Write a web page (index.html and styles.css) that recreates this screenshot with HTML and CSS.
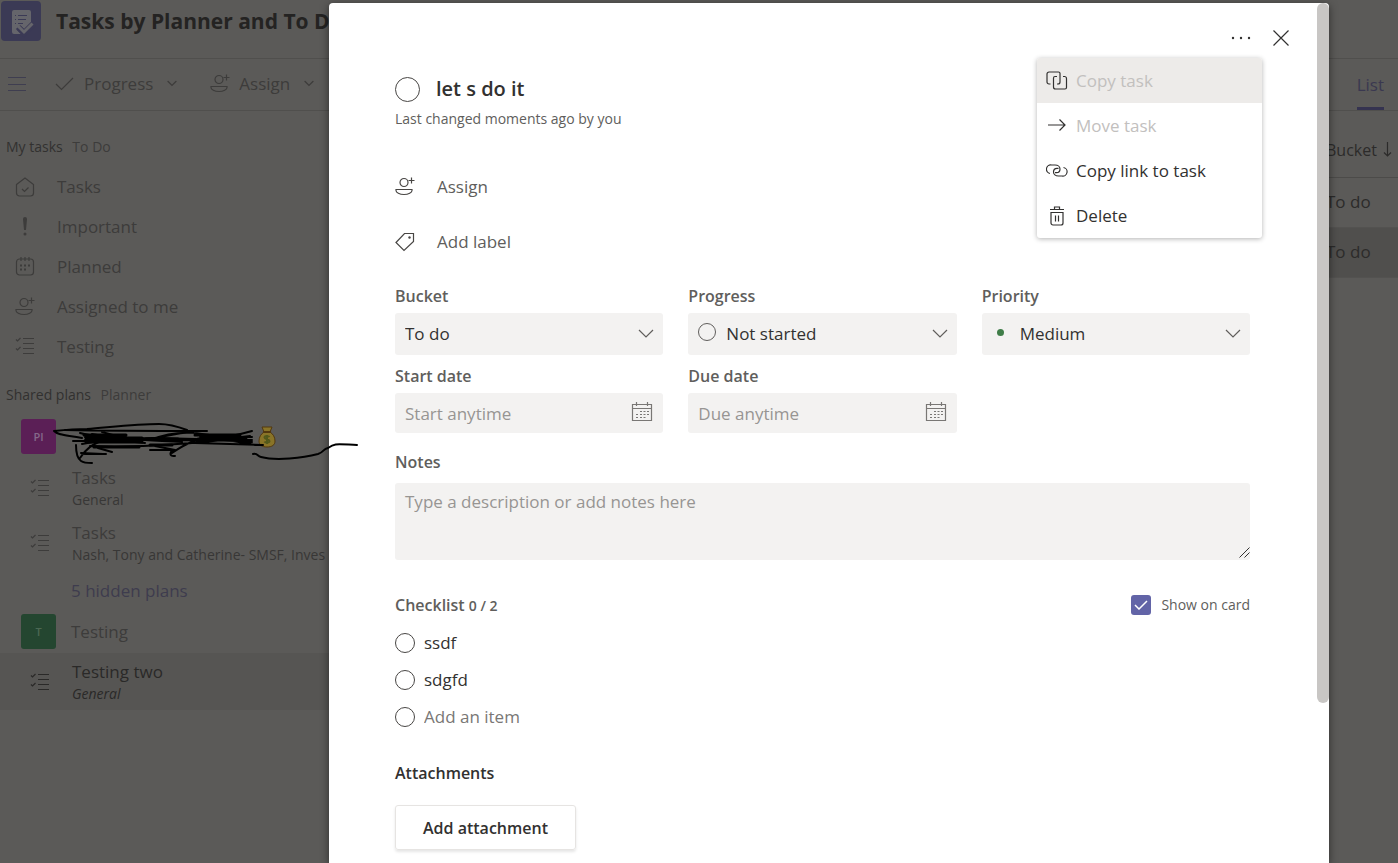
FILE: index.html
```html
<!DOCTYPE html>
<html lang="en">
<head>
<meta charset="utf-8">
<title>Tasks by Planner and To Do</title>
<link rel="stylesheet" href="styles.css">
</head>
<body>
<svg class="sprite" aria-hidden="true">
  <symbol id="i-person" viewBox="0 0 20 20"><circle cx="9" cy="5.500" r="4"/><path d="M16.500 0.500v6M13.500 3.500h6M1 12.500h16v1c0 2-3.500 4-8 4s-8-2-8-4z"/></symbol>
  <symbol id="i-list" viewBox="0 0 20 20"><path d="M1 2.500l1.500 1.500 3-3M1 11.500l1.500 1.500 3-3M8 1.500h11M8 6.500h11M8 11.500h11M8 16.500h11"/></symbol>
  <symbol id="i-chev" viewBox="0 0 16 10"><path d="M1 1l7 7 7-7"/></symbol>
  <symbol id="i-cal" viewBox="0 0 22 20"><path d="M1.500 2.500h19v16h-19zM1.500 6.500h19M5.500 0v4M16.500 0v4"/><path d="M9 9.500h2M12.500 9.500h2M16 9.500h2M5 12.500h2M9 12.500h2M12.500 12.500h2M16 12.500h2M5 15.500h2M9 15.500h2M12.500 15.500h2"/></symbol>
</svg>

<div class="app">
  <header class="app-header">
    <svg class="logo" viewBox="0 0 40 40" aria-hidden="true">
      <rect width="40" height="40" rx="4" class="logo-bg"/>
      <path class="logo-fg" d="M13 9h15a2 2 0 0 1 2 2v12l-6 6-4-4-4 4 4 4h-7a2 2 0 0 1-2-2V11a2 2 0 0 1 2-2z"/>
      <path class="logo-line" d="M14 14.500h1M17 14.500h9M14 18.500h1M17 18.500h8M14 22.500h1M17 22.500h5"/>
      <path class="logo-cut" d="M17 26l6 6 9-9"/>
      <path class="logo-check" d="M17 25l6 6 8.500-8.500"/>
    </svg>
    <h1 class="app-title">Tasks by Planner and To Do</h1>
  </header>

  <div class="toolbar">
    <button class="tool menu-toggle" aria-label="Toggle navigation"><svg width="18" height="16" viewBox="0 0 18 16"><path d="M0 1.500h18M0 8.500h18M0 14.500h18"/></svg></button>
    <button class="tool tool-progress"><svg width="20" height="14" viewBox="0 0 20 14"><path d="M1 7l5.500 5.500L18 1"/></svg><span>Progress</span><svg class="tool-chev" width="10" height="7" viewBox="0 0 16 10"><use href="#i-chev"/></svg></button>
    <button class="tool"><svg width="20" height="20"><use href="#i-person"/></svg><span>Assign</span><svg class="tool-chev" width="10" height="7" viewBox="0 0 16 10"><use href="#i-chev"/></svg></button>
    <a class="tab" href="#list">List</a>
  </div>

  <div class="workspace">
    <nav class="sidebar">
      <h2 class="side-heading">My tasks <small>To Do</small></h2>
      <a class="side-item" href="#tasks"><svg width="20" height="20" viewBox="0 0 20 20"><path d="M1.500 7.500L10 1l8.500 6.500V16a3 3 0 0 1-3 3h-11a3 3 0 0 1-3-3zM7 12l2.500 2.500 4-4"/></svg>Tasks</a>
      <a class="side-item" href="#important"><svg width="20" height="20" viewBox="0 0 20 20"><path class="solid" d="M8 2a2 2 0 0 1 4 0l-1 11H9z"/><circle class="solid" cx="10" cy="17" r="1.500"/></svg>Important</a>
      <a class="side-item" href="#planned"><svg width="20" height="20" viewBox="0 0 20 20"><rect x="1.500" y="2" width="17" height="16" rx="3"/><path d="M6 0v4M10 0v4M14 0v4"/><path class="dots" d="M5 8.500h2M9 8.500h2M13 8.500h2M5 12.500h2M9 12.500h2"/></svg>Planned</a>
      <a class="side-item" href="#assigned"><svg width="20" height="20"><use href="#i-person"/></svg>Assigned to me</a>
      <a class="side-item" href="#testing"><svg width="20" height="20"><use href="#i-list"/></svg>Testing</a>

      <h2 class="side-heading shared">Shared plans <small>Planner</small></h2>
      <div class="plan"><span class="avatar pink">PI</span>
        <svg class="money" width="18" height="22" viewBox="0 0 18 22" aria-hidden="true"><path class="bag" d="M4 1h10l-2 5c3 2 5 5 5 9 0 4-3 6-8 6s-8-2-8-6c0-4 2-7 5-9z"/><path class="tie" d="M5 6h8"/><path class="dollar" d="M11.500 11c-1-1.500-5-1.500-5 .5s5 1.500 5 3.500-4 2-5 .5M9 9v9"/></svg>
      </div>
      <a class="channel first" href="#general"><svg width="20" height="20"><use href="#i-list"/></svg><span>Tasks<small>General</small></span></a>
      <a class="channel" href="#smsf"><svg width="20" height="20"><use href="#i-list"/></svg><span>Tasks<small>Nash, Tony and Catherine- SMSF, Inves</small></span></a>
      <a class="hidden-plans" href="#hidden">5 hidden plans</a>
      <div class="plan"><span class="avatar green">T</span>Testing</div>
      <a class="channel selected" href="#testing-two"><svg width="20" height="20"><use href="#i-list"/></svg><span>Testing two<small>General</small></span></a>
    </nav>
    <main class="tasks">
      <table class="task-table">
        <colgroup><col><col class="bucket-col"></colgroup>
        <thead><tr><td></td><th scope="col"><span class="sort">Bucket<svg width="9" height="15" viewBox="0 0 9 15"><path d="M4.500 0v14M1 10.500L4.500 14 8 10.500"/></svg></span></th></tr></thead>
        <tbody>
          <tr><td></td><td>To do</td></tr>
          <tr class="current"><td></td><td>To do</td></tr>
        </tbody>
      </table>
    </main>
  </div>
</div>

<div class="overlay">
  <section class="dialog" role="dialog" aria-labelledby="task-title">
    <div class="thumb"></div>
    <div class="dialog-actions">
      <button class="icon-btn" aria-label="More options"><svg width="20" height="4" viewBox="0 0 20 4"><circle class="solid" cx="2" cy="2" r="1.200"/><circle class="solid" cx="10" cy="2" r="1.200"/><circle class="solid" cx="18" cy="2" r="1.200"/></svg></button>
      <button class="icon-btn" aria-label="Close"><svg width="16" height="16" viewBox="0 0 16 16"><path d="M.5.500l15 15M15.500.500l-15 15"/></svg></button>
    </div>
    <div class="menu" role="menu">
      <button class="menu-item hover" role="menuitem" disabled><svg width="22" height="20" viewBox="0 0 22 20"><path d="M4.500 13H3a2 2 0 0 1-2-2V3a2 2 0 0 1 2-2h9.500a1.500 1.500 0 0 1 1.500 1.500V11a2 2 0 0 1-2 2h-1M11 5.500H9a1.500 1.500 0 0 0-1.500 1.500v9a2 2 0 0 0 2 2H19a1.500 1.500 0 0 0 1.500-1.500V7.500a2 2 0 0 0-2-2H17"/></svg>Copy task</button>
      <button class="menu-item" role="menuitem" disabled><svg width="22" height="20" viewBox="0 0 22 20"><path d="M2 9h17M13.500 3.500L19 9l-5.500 5.500"/></svg>Move task</button>
      <button class="menu-item" role="menuitem"><svg width="22" height="20" viewBox="0 0 22 20"><path d="M4 12.500A4.200 4.200 0 0 1 5.500 4H9c3 0 5 1.800 5 4s-1.500 3.700-3.500 3.700H9M17.500 6.500A4.200 4.200 0 0 1 16 15h-3.500c-3 0-5-1.800-5-4s1.500-3.700 3.500-3.700h1.500"/></svg>Copy link to task</button>
      <button class="menu-item" role="menuitem"><svg width="22" height="20" viewBox="0 0 22 20"><path d="M4 3.500h14M8.500 3V1h5v2M5 6.500h12V17a2 2 0 0 1-2 2H7a2 2 0 0 1-2-2zM9.500 9.500v6M12.500 9.500v6"/></svg>Delete</button>
    </div>

    <div class="title-row"><input class="round large" type="checkbox" aria-label="Mark task complete"><h2 id="task-title">let s do it</h2></div>
    <p class="changed">Last changed moments ago by you</p>
    <button class="meta assign"><svg width="22" height="20" viewBox="0 0 22 20"><use href="#i-person" width="20" height="20"/></svg>Assign</button>
    <button class="meta label"><svg width="22" height="20" viewBox="0 0 22 20"><path d="M1 10.500L9.500 1.500h9v8L9 18.500z"/><circle class="solid" cx="14.500" cy="5.500" r="1.200"/></svg>Add label</button>

    <div class="fields">
      <div class="field"><label for="bucket">Bucket</label>
        <div class="control"><select id="bucket"><option>To do</option></select><svg class="chev" width="16" height="10"><use href="#i-chev"/></svg></div></div>
      <div class="field"><label for="progress">Progress</label>
        <div class="control"><span class="status"></span><select id="progress" class="with-icon"><option>Not started</option></select><svg class="chev" width="16" height="10"><use href="#i-chev"/></svg></div></div>
      <div class="field"><label for="priority">Priority</label>
        <div class="control"><span class="dot"></span><select id="priority" class="with-icon"><option>Medium</option></select><svg class="chev" width="16" height="10"><use href="#i-chev"/></svg></div></div>
      <div class="field"><label for="start">Start date</label>
        <div class="control"><input id="start" type="text" placeholder="Start anytime"><svg class="cal" width="22" height="20"><use href="#i-cal"/></svg></div></div>
      <div class="field"><label for="due">Due date</label>
        <div class="control"><input id="due" type="text" placeholder="Due anytime"><svg class="cal" width="22" height="20"><use href="#i-cal"/></svg></div></div>
    </div>

    <div class="field notes"><label for="notes">Notes</label>
      <div class="control"><textarea id="notes" placeholder="Type a description or add notes here"></textarea><svg class="grip" width="11" height="11" viewBox="0 0 11 11"><path d="M.5 10.500l10-10M5.500 10.500l5-5"/></svg></div></div>

    <div class="check-head">
      <h3>Checklist <small>0 / 2</small></h3>
      <label class="show"><span class="tick"><input type="checkbox" checked><svg width="14" height="10" viewBox="0 0 14 10"><path d="M1 5l4 4 8-8"/></svg></span>Show on card</label>
    </div>
    <ul class="checklist">
      <li><label><input class="round" type="checkbox">ssdf</label></li>
      <li><label><input class="round" type="checkbox">sdgfd</label></li>
      <li><input class="round" type="checkbox" aria-label="New item done"><input class="new-item" type="text" placeholder="Add an item" aria-label="Add an item"></li>
    </ul>

    <h3 class="attachments">Attachments</h3>
    <button class="attach">Add attachment</button>
  </section>
</div>

<svg class="scribble" width="370" height="50" viewBox="0 0 370 50" aria-hidden="true">
  <path d="M54 11c10-1 20-2 33-2 25-2 50-5 72-5 12 0 20 3 28 6M54 11c5 5 14 4 28 7M65 10c45 1 90 1 142 1M73 21h60c20-1 40-8 60-9M80 13c30 8 60 6 90 7s50 0 82-9M82 24c50-10 110-5 170-2M85 17l60 6M92 14l46 8M90 26c50 2 100-2 150-8M85 20h80M102 12c30 10 50 8 80 10M76 25c0 9 2 14 5 16 3 2 6 2 11 2M80 38c6-9 12-14 24-18M82 34h24M98 28l14 4M81 33l22 1M150 30h25M155 26l20 4M175 36c-7 1-5-6 0-6M172 33c10-7 14-9 22-12M150 20c30-12 50-8 100 3M195 14l60 11M200 17h52M190 23l60-7M195 23l68 2M210 20h42"/>
  <path d="M84 15h42M86 18h56M86 22h56M94 27h45M195 15h45M198 19h48M146 19h32M150 25h22" class="thick"/>
  <path d="M253 34c5-1 4 2 8 3 15 4 42 1 57-3 6-2 5-5 10-6 7-5 8-4 29-3"/>
</svg>
</body>
</html>
```

FILE: styles.css
```css
* { box-sizing: border-box; }
body { margin: 0; font: 17px/22px "Open Sans", "Noto Sans", sans-serif; color: #3d3c3b; background: #5b5a58; min-height: 100vh; overflow: hidden; }
button, input, select, textarea { font: inherit; color: inherit; }
button { border: 0; background: none; padding: 0; }
a { color: inherit; text-decoration: none; }
h1, h2, h3, p, ul { margin: 0; padding: 0; }
small { font-size: 14px; }
svg { flex: none; fill: none; stroke: currentColor; stroke-width: 1.2; }
.solid { fill: currentColor; stroke: none; }
.sprite { position: absolute; width: 0; height: 0; }

.app-header { display: flex; align-items: flex-start; gap: 15px; height: 59px; padding: 1px; border-bottom: 1px solid #504f4d; }
.logo { width: 40px; height: 40px; }
.logo-bg { fill: #3b3a55; stroke: none; }
.logo-fg { fill: #65656b; stroke: none; }
.logo-line { stroke: #3b3a55; }
.logo-cut { stroke: #3b3a55; stroke-width: 6; }
.logo-check { stroke: #65656b; stroke-width: 3; }
.app-title { font-size: 21px; line-height: 41px; font-weight: 700; color: #242322; white-space: nowrap; }

.toolbar { display: flex; align-items: center; height: 52px; padding: 0 14px 2px 8px; border-bottom: 1px solid #504f4d; }
.tool { display: flex; align-items: center; gap: 9px; }
.tool .tool-chev { margin-left: 5px; stroke-width: 2; }
.menu-toggle { margin-right: 29px; color: #3f3e50; }
.tool-progress { margin-right: 33px; }
.tab { margin: 0 0 -2px auto; align-self: stretch; line-height: 52px; color: #3a3850; border-bottom: 3px solid #353350; }

.workspace { display: flex; }
.sidebar { flex: none; width: 329px; padding-top: 25px; overflow: hidden; }
.side-heading { font-size: 14px; font-weight: 400; padding-left: 6px; margin-bottom: 9px; color: #323130; }
.side-heading small { margin-left: 6px; color: #3d3c3b; }
.shared { margin: 17px 0 13px; }
.side-item { display: flex; align-items: center; height: 40px; padding-left: 15px; gap: 22px; }
.dots { stroke-width: 2; }
.plan { display: flex; align-items: center; gap: 15px; height: 35px; padding-left: 21px; }
.avatar { width: 35px; height: 35px; border-radius: 3px; text-align: center; font-size: 11px; line-height: 35px; font-weight: 600; }
.pink { background: #5b1f56; color: #85698a; }
.green { background: #244630; color: #4c6853; }
.money { margin-left: 187px; stroke-width: 1; }
.bag { fill: #897428; stroke: #53380f; }
.tie { stroke: #53380f; stroke-width: 2; }
.dollar { stroke: #52591b; stroke-width: 2; }
.channel { display: flex; align-items: center; height: 55px; padding-left: 30px; gap: 22px; white-space: nowrap; }
.channel small { display: block; line-height: 21px; color: #383736; }
.first { margin-top: 7px; }
.hidden-plans { display: block; line-height: 40px; margin: 0 0 3px 71px; color: #3e3c4e; }
.selected { margin-top: 4px; height: 57px; padding-top: 2px; background: #565553; color: #2a2928; }
.selected small { font-style: italic; color: #2a2928; }

.tasks { flex: 1; }
.task-table { width: 100%; table-layout: fixed; border-collapse: collapse; }
.bucket-col { width: 72px; }
.task-table th, .task-table td { height: 50px; padding: 0; font-weight: 400; text-align: left; color: #2c2b2a; white-space: nowrap; }
.task-table thead th { height: 66px; padding-top: 12px; border-bottom: 1px solid #4c4b49; }
.task-table tbody tr { border-bottom: 1px solid #535250; }
.sort { display: flex; align-items: center; gap: 6px; font-size: 16px; }
.current { background: #504f4d; }

.overlay { position: absolute; inset: 0; display: flex; padding: 3px 69px 0 329px; }
.dialog { position: relative; flex: 1; min-width: 0; padding: 19px 79px 14px 66px; background: #fff; border-radius: 4px 4px 0 0; box-shadow: 0 2px 8px rgba(0, 0, 0, .5); color: #323130; }
.thumb { position: absolute; top: 0; right: 0; width: 12px; height: 700px; border-radius: 6px; background: #c8c6c4; }
.dialog-actions { display: flex; justify-content: flex-end; gap: 8px; margin-right: -47px; }
.icon-btn { display: flex; align-items: center; justify-content: center; width: 32px; height: 32px; }

.menu { position: absolute; z-index: 1; top: 55px; right: 67px; width: 225px; background: #fff; border-radius: 3px; box-shadow: 0 1px 5px rgba(0, 0, 0, .3); overflow: hidden; }
.menu-item { display: flex; align-items: center; gap: 8px; width: 100%; height: 45px; padding-left: 9px; }
.menu-item svg { color: #323130; }
.menu-item:disabled { color: #c2c0be; }
.hover { background: #edebe9; }

.title-row { display: flex; align-items: center; gap: 16px; height: 30px; margin-top: 20px; }
.title-row h2 { font-size: 20px; font-weight: 600; }
.round { appearance: none; flex: none; width: 20px; height: 20px; margin: 0; border: 1px solid #484644; border-radius: 50%; }
.large { width: 25px; height: 25px; }
.changed { margin-top: 4px; font-size: 14px; color: #605e5c; }
.meta { display: flex; align-items: center; gap: 20px; height: 30px; color: #605e5c; }
.meta svg { color: #484644; }
.assign { margin-top: 42px; }
.label { margin-top: 25px; }

.fields { display: grid; grid-template-columns: repeat(3, 1fr); gap: 10px 25px; margin-top: 28px; }
.field { display: grid; gap: 6px; }
.field > label, .check-head h3 { font-size: 16px; font-weight: 600; color: #605e5c; }
.control { position: relative; display: flex; }
.control select, .control input, .control textarea { appearance: none; width: 100%; height: 42px; padding: 0 10px; border: 0; border-radius: 3px; background: #f3f2f1; }
.control input { height: 40px; }
.control .with-icon { padding-left: 38px; }
::placeholder { color: #979593; opacity: 1; }
.chev { position: absolute; right: 9px; top: 16px; color: #605e5c; }
.cal { position: absolute; right: 10px; top: 9px; color: #797775; }
.status { position: absolute; left: 10px; top: 10px; width: 18px; height: 18px; border: 1px solid #605e5c; border-radius: 50%; }
.dot { position: absolute; left: 15px; top: 16px; width: 7px; height: 7px; border-radius: 50%; background: #3f7d48; }
.notes { margin-top: 18px; gap: 10px; }
.notes textarea { height: 77px; padding: 8px 10px; resize: none; }
.grip { position: absolute; right: 0; bottom: 2px; stroke-width: 1; }

.check-head { display: flex; align-items: center; justify-content: space-between; height: 30px; margin-top: 30px; }
.show { display: flex; align-items: center; gap: 10px; font-size: 14px; color: #605e5c; }
.tick { position: relative; display: flex; }
.tick input { appearance: none; width: 20px; height: 20px; margin: 0; border-radius: 3px; background: #6264a7; }
.tick svg { position: absolute; left: 3px; top: 5px; color: #fff; stroke-width: 1.5; }
.checklist { list-style: none; margin-top: 4px; }
.checklist li, .checklist label { display: flex; align-items: center; gap: 9px; height: 37px; }
.new-item { flex: 1; border: 0; padding: 0; background: none; }
.new-item::placeholder { color: #797775; }
.attachments { margin-top: 27px; font-size: 16px; font-weight: 600; }
.attach { margin-top: 21px; height: 45px; padding: 0 27px; font-weight: 600; font-size: 16px; border: 1px solid #e6e4e2; border-radius: 3px; box-shadow: 0 2px 3px rgba(0, 0, 0, .1); }

.scribble { position: absolute; left: 0; top: 420px; pointer-events: none; color: #000; stroke-width: 2; stroke-linecap: round; stroke-linejoin: round; }
.thick { stroke-width: 3; }
```
